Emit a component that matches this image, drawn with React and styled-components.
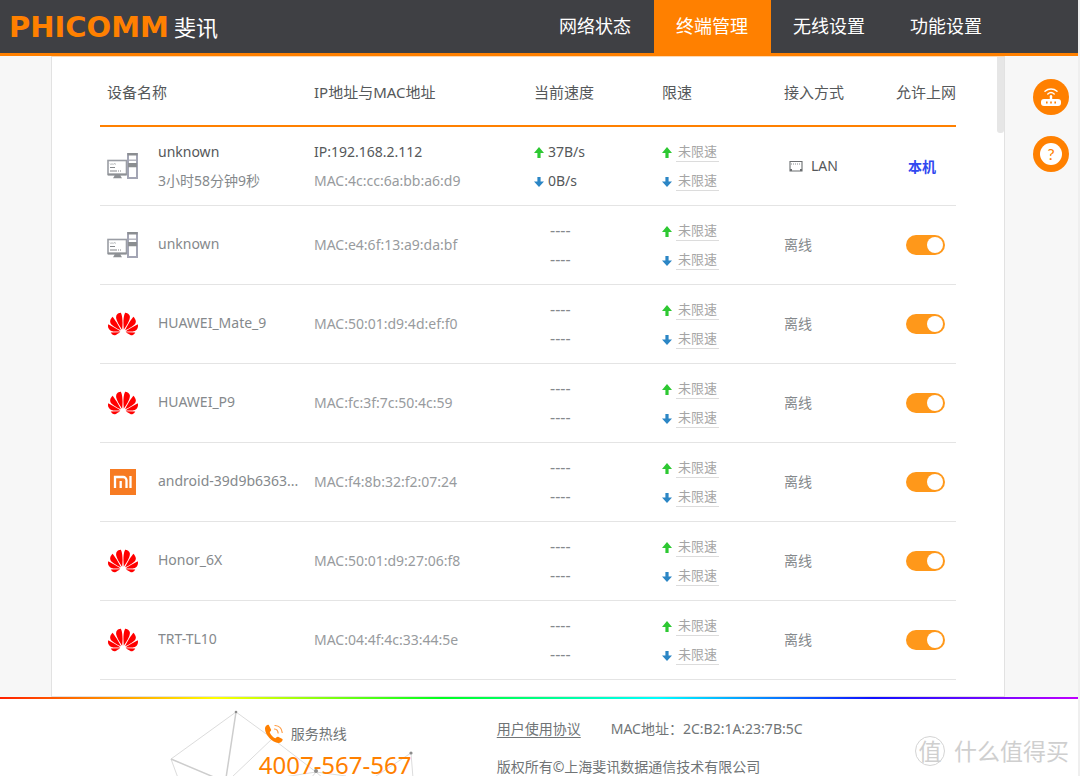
import React, { useState } from 'react'
import styled, { createGlobalStyle } from 'styled-components'
import { SiHuawei } from 'react-icons/si'

const GlobalStyle = createGlobalStyle`
    * {
        box-sizing: border-box;
    }
    body {
        margin: 0;
        background: #f7f7f7;
        color: #55585a;
        font-family: "Noto Sans", "Noto Sans CJK SC", sans-serif;
        font-size: 14px;
    }
    button {
        font-family: inherit;
    }
`

const Page = styled.div`
    display: flex;
    flex-direction: column;
    height: 100vh;
    border-right: 2px solid #efefef;
`

const Header = styled.header`
    display: flex;
    align-items: stretch;
    justify-content: space-between;
    flex: none;
    height: 56px;
    padding-right: 73px;
    background: #3f4044;
    border-bottom: 3px solid #ff8000;
`

const Brand = styled.a`
    display: flex;
    align-items: center;
    gap: 5px;
    padding-left: 9px;
    color: #fff;
    font-size: 22px;
    line-height: 32px;
    text-decoration: none;
`

const Wordmark = styled.span`
    color: #ff8000;
    font-family: "DejaVu Sans", sans-serif;
    font-weight: bold;
    font-size: 29px;
`

const Nav = styled.nav`
    display: flex;
`

const NavLink = styled.a`
    display: flex;
    align-items: center;
    padding: 0 22px 4px;
    color: #fff;
    background: ${props => props.$active ? '#ff8000' : 'transparent'};
    font-size: 18px;
    text-decoration: none;
    border-right: 1px solid transparent;
`

const Main = styled.main`
    display: flex;
    flex: 1;
    min-height: 0;
    padding-left: 51px;
`

const Panel = styled.section`
    display: flex;
    flex: 1;
    background: #fff;
    border: 1px solid #e2e2e2;
    border-top-color: #fdd9b3;
    overflow: hidden;
    padding-left: 48px;
`

const ScrollThumb = styled.div`
    flex: none;
    width: 7px;
    height: 76px;
    margin-left: 41px;
    border-radius: 0 0 3px 3px;
    background: #e6e6e6;
`

const Table = styled.table`
    flex: 1;
    align-self: flex-start;
    table-layout: fixed;
    border-collapse: collapse;
`

const Col = styled.col`
    width: ${props => props.$width};
`

const HeadCell = styled.th`
    height: 69px;
    padding: 0 0 0 ${props => props.$inset || 0}px;
    border-bottom: 2px solid #ff8000;
    font-size: 15px;
    font-weight: normal;
    text-align: left;
    white-space: nowrap;
`

const Row = styled.tr`
    color: ${props => props.$online ? '#55585a' : '#85898c'};
`

const Cell = styled.td`
    height: 79px;
    padding: 0 0 0 ${props => props.$inset || 0}px;
    border-bottom: 1px solid #e4e4e4;
    white-space: nowrap;
`

const Device = styled.div`
    display: flex;
    align-items: center;
    gap: 20px;
`

const DeviceIcon = styled.div`
    display: flex;
    justify-content: center;
    width: 31px;
`

const Lines = styled.div`
    line-height: 29px;
    padding-bottom: ${props => props.$raised ? 3 : 0}px;
`

const DeviceName = styled.div`
    width: 142px;
    overflow: hidden;
    text-overflow: ellipsis;
`

const Muted = styled.div`
    color: ${props => props.$light ? '#989b9e' : '#85898c'};
`

const Speed = styled.div`
    display: flex;
    align-items: center;
    gap: 4px;
    height: 29px;
`

const NoSpeed = styled.div`
    padding-left: 16px;
    font-size: 16px;
`

const LimitButton = styled.button`
    padding: 0 2px;
    border: 0;
    border-bottom: 1px solid #dcdcdc;
    background: none;
    color: #a5a5a5;
    font-size: 13px;
    line-height: 20px;
`

const Wired = styled.div`
    display: flex;
    align-items: center;
    gap: 8px;
    padding-left: 5px;
`

const Local = styled.strong`
    padding-left: 2px;
    color: #3048f0;
`

const Toggle = styled.input`
    appearance: none;
    display: block;
    width: 39px;
    height: 20px;
    margin: 0;
    padding: 2px;
    border-radius: 10px;
    background: ${props => props.checked ? '#ff981a' : '#ccc'};

    &::before {
        content: "";
        display: block;
        width: 16px;
        height: 16px;
        margin-left: ${props => props.checked ? 'auto' : 0};
        border-radius: 50%;
        background: #fff;
    }
`

const Side = styled.aside`
    display: flex;
    flex-direction: column;
    gap: 21px;
    flex: none;
    width: 73px;
    padding: 23px 0 0 28px;
`

const RoundButton = styled.button`
    display: flex;
    align-items: center;
    justify-content: center;
    width: 36px;
    height: 36px;
    padding: 0;
    border: 0;
    border-radius: 50%;
    background: #ff8000;
`

const Question = styled.span`
    width: 22px;
    height: 22px;
    border-radius: 50%;
    background: #fff;
    color: #ff8000;
    font-family: Lato, sans-serif;
    font-size: 16px;
    line-height: 22px;
`

const Rainbow = styled.div`
    flex: none;
    height: 2px;
    background: linear-gradient(to right, #ff2000, #ffff00 20%, #00ff20 41%, #00ffff 61%, #1010ff 81%, #c000ff);
`

const Footer = styled.footer`
    position: relative;
    display: flex;
    flex: none;
    padding: 21px 9px 0 24%;
    background: #fff;
    color: #707476;
    overflow: hidden;
`

const Mesh = styled.svg`
    position: absolute;
    left: 170px;
    top: 11px;
`

const Hotline = styled.div`
    position: relative;
    flex: none;
    width: 238px;
`

const HotlineLabel = styled.div`
    display: flex;
    align-items: center;
    gap: 7px;
    padding: 3px 0 9px 5px;
    line-height: 22px;
`

const Phone = styled.div`
    color: #ff8000;
    font-size: 24px;
    line-height: 22px;
`

const Legal = styled.div`
    flex: 1;
    line-height: 18px;
    white-space: nowrap;
`

const LegalRow = styled.div`
    display: flex;
    gap: 30px;
    margin-bottom: 20px;
`

const Agreement = styled.a`
    color: inherit;
    text-underline-offset: 3px;
`

const Stamp = styled.div`
    display: flex;
    align-items: center;
    align-self: flex-start;
    gap: 9px;
    padding-top: 14px;
    color: #cfcfcf;
    font-size: 23px;
    line-height: 34px;
    white-space: nowrap;
`

const StampMark = styled.span`
    width: 30px;
    height: 30px;
    border: 1px solid #d4d4d4;
    border-radius: 50%;
    line-height: 28px;
    text-align: center;
`

const Arrow = ({ down }) => (
    <svg width="10" height="15" viewBox="0 0 10 15">
        {down
            ? <path d="M3.4 4h3.2v4.500H10L5 14 0 8.500h3.400z" fill="#2b86c5" />
            : <path d="M3.4 14h3.2V9H10L5 3 0 9h3.400z" fill="#2dc832" />}
    </svg>
)

const Computer = () => (
    <svg width="31" height="26" viewBox="0 0 31 26">
        <rect x="1" y="7.5" width="18.5" height="14" fill="#fff" stroke="#9a9da4" strokeWidth="1.6" />
        <path d="M1 20.6h18.500v1.800H1zM8 22h5l2 3.200H6z" fill="#8d9094" />
        <path d="M3 10.5l1 1.200 1-1.200 1 1.200 1-1.200 2 .8" stroke="#b8babd" strokeWidth="1" fill="none" />
        <path d="M3 14.5h5M3 18h7M11 18h1M13 18h1" stroke="#85888c" strokeWidth="1.2" fill="none" />
        <rect x="21" y="1" width="9" height="24" fill="#fff" stroke="#a3a5b4" strokeWidth="2" />
        <path d="M20.500 0H30.500v2.600h-10zM21 10h9v4.200h-9z" fill="#8b8e91" />
        <path d="M22 7.200h7" stroke="#aaacb5" strokeWidth="1.300" />
    </svg>
)

const Mi = () => (
    <svg width="26" height="26" viewBox="0 0 26 26">
        <rect width="26" height="26" fill="#f77b22" />
        <path d="M5 19V8h8.2a3.3 3.3 0 0 1 3.3 3.3V19M10.7 12v7M20.5 7v12" fill="none" stroke="#fff" strokeWidth="2.3" />
    </svg>
)

const LanPort = () => (
    <svg width="14" height="12" viewBox="0 0 14 12">
        <path d="M1 1.500h12v9.500H1z" fill="none" stroke="#6b6e70" strokeWidth="1.1" />
        <path d="M2 4h10" stroke="#8c8f92" strokeDasharray="1 1" />
        <path d="M1 9h2v2H1zM11 9h2v2h-2z" fill="#6b6e70" />
    </svg>
)

const Router = () => (
    <svg width="22" height="20" viewBox="0 0 22 20" fill="none" stroke="#fff">
        <path d="M5 4.200a9 9 0 0 1 12 0M7.800 7a4.800 4.800 0 0 1 6.400 0" strokeWidth="1.5" strokeLinecap="round" />
        <path d="M11 9.200v3" strokeWidth="2.4" strokeLinecap="round" />
        <rect x="1" y="12" width="20" height="7" rx="3" fill="#fff" stroke="none" />
        <path d="M6 15.5h1.6M10.2 15.5h1.6M14.4 15.5H16" stroke="#ff8000" strokeWidth="1.8" />
    </svg>
)

const Handset = () => (
    <svg width="20" height="20" viewBox="0 0 20 20">
        <path d="M1.2 3.2C2 1 4 .2 4.8 1L7 5.4c.4 1-.2 1.6-1.3 2.5.6 2.5 3.6 5.6 5.8 6.4.8-.8 1.5-1.9 2.6-1.6l4.3 2.4c.9.9-1.2 3.5-3.4 3.8C8 19.3-.4 9.5 1.2 3.2z" fill="#ff8000" />
        <path d="M10.5 5c2 .2 3.4 1.800 3.600 4M11 1.500c4 .3 6.800 3.200 7.200 7" fill="none" stroke="#ff9a40" strokeWidth="1.2" strokeLinecap="round" />
    </svg>
)

const icons = {
    pc: <Computer />,
    huawei: <SiHuawei size={30} color="#ff0000" />,
    mi: <Mi />,
}

const devices = [
    { icon: 'pc', name: 'unknown', uptime: '3小时58分钟9秒', ip: '192.168.2.112', mac: '4c:cc:6a:bb:a6:d9', up: '37B/s', down: '0B/s', online: true },
    { icon: 'pc', name: 'unknown', mac: 'e4:6f:13:a9:da:bf' },
    { icon: 'huawei', name: 'HUAWEI_Mate_9', mac: '50:01:d9:4d:ef:f0' },
    { icon: 'huawei', name: 'HUAWEI_P9', mac: 'fc:3f:7c:50:4c:59' },
    { icon: 'mi', name: 'android-39d9b6363...', mac: 'f4:8b:32:f2:07:24' },
    { icon: 'huawei', name: 'Honor_6X', mac: '50:01:d9:27:06:f8' },
    { icon: 'huawei', name: 'TRT-TL10', mac: '04:4f:4c:33:44:5e' },
]

const DeviceRow = ({ device }) => {
    const [allowed, setAllowed] = useState(true)
    return (
        <Row $online={device.online}>
            <Cell $inset={7}>
                <Device>
                    <DeviceIcon>{icons[device.icon]}</DeviceIcon>
                    <Lines $raised={!device.online}>
                        <DeviceName>{device.name}</DeviceName>
                        {device.uptime && <Muted>{device.uptime}</Muted>}
                    </Lines>
                </Device>
            </Cell>
            <Cell>
                <Lines>
                    {device.ip && <div>IP:{device.ip}</div>}
                    <Muted $light>MAC:{device.mac}</Muted>
                </Lines>
            </Cell>
            <Cell>
                {device.online ? (
                    <>
                        <Speed><Arrow />{device.up}</Speed>
                        <Speed><Arrow down />{device.down}</Speed>
                    </>
                ) : (
                    <Lines>
                        <NoSpeed>----</NoSpeed>
                        <NoSpeed>----</NoSpeed>
                    </Lines>
                )}
            </Cell>
            <Cell>
                <Speed><Arrow /><LimitButton>未限速</LimitButton></Speed>
                <Speed><Arrow down /><LimitButton>未限速</LimitButton></Speed>
            </Cell>
            <Cell>
                {device.online ? <Wired><LanPort />LAN</Wired> : <Lines>离线</Lines>}
            </Cell>
            <Cell $inset={10}>
                {device.online
                    ? <Local>本机</Local>
                    : <Toggle type="checkbox" aria-label="允许上网" checked={allowed} onChange={() => setAllowed(!allowed)} />}
            </Cell>
        </Row>
    )
}

const App = () => (
    <Page>
        <GlobalStyle />
        <Header>
            <Brand href="#"><Wordmark>PHICOMM</Wordmark>斐讯</Brand>
            <Nav>
                <NavLink href="#status">网络状态</NavLink>
                <NavLink href="#devices" $active>终端管理</NavLink>
                <NavLink href="#wireless">无线设置</NavLink>
                <NavLink href="#features">功能设置</NavLink>
            </Nav>
        </Header>
        <Main>
            <Panel>
                <Table>
                    <colgroup>
                        <Col $width="25%" />
                        <Col />
                        <Col $width="128px" />
                        <Col $width="122px" />
                        <Col $width="112px" />
                        <Col $width="60px" />
                    </colgroup>
                    <thead>
                        <tr>
                            <HeadCell $inset={7}>设备名称</HeadCell>
                            <HeadCell>IP地址与MAC地址</HeadCell>
                            <HeadCell>当前速度</HeadCell>
                            <HeadCell>限速</HeadCell>
                            <HeadCell>接入方式</HeadCell>
                            <HeadCell>允许上网</HeadCell>
                        </tr>
                    </thead>
                    <tbody>
                        {devices.map(device => <DeviceRow key={device.mac} device={device} />)}
                    </tbody>
                </Table>
                <ScrollThumb />
            </Panel>
            <Side>
                <RoundButton aria-label="路由器"><Router /></RoundButton>
                <RoundButton aria-label="帮助"><Question>?</Question></RoundButton>
            </Side>
        </Main>
        <Rainbow />
        <Footer>
            <Mesh width="260" height="68" viewBox="0 0 260 68" fill="none" stroke="#dcdcdc">
                <path d="M66 2L1 49l7 19M66 2l33 24 47 36 7 6M103 28L61 68M146 62l-32 5M146 62l30 4M146 62l-5 6M241 43l2 25M241 43l-38 25" />
                <path d="M66 2L56 68M1 49l45 19" stroke="#cdcdcd" strokeWidth="1.5" />
                <g fill="#8c8c8c" stroke="none">
                    <circle cx="66" cy="2" r="1.3" />
                    <circle cx="146" cy="61" r="2" />
                    <circle cx="241" cy="43" r="1.6" />
                </g>
            </Mesh>
            <Hotline>
                <HotlineLabel><Handset />服务热线</HotlineLabel>
                <Phone>4007-567-567</Phone>
            </Hotline>
            <Legal>
                <LegalRow>
                    <Agreement href="#agreement">用户使用协议</Agreement>
                    <span>MAC地址：2C:B2:1A:23:7B:5C</span>
                </LegalRow>
                <div>版权所有©上海斐讯数据通信技术有限公司</div>
            </Legal>
            <Stamp><StampMark>值</StampMark>什么值得买</Stamp>
        </Footer>
    </Page>
)

export default App
